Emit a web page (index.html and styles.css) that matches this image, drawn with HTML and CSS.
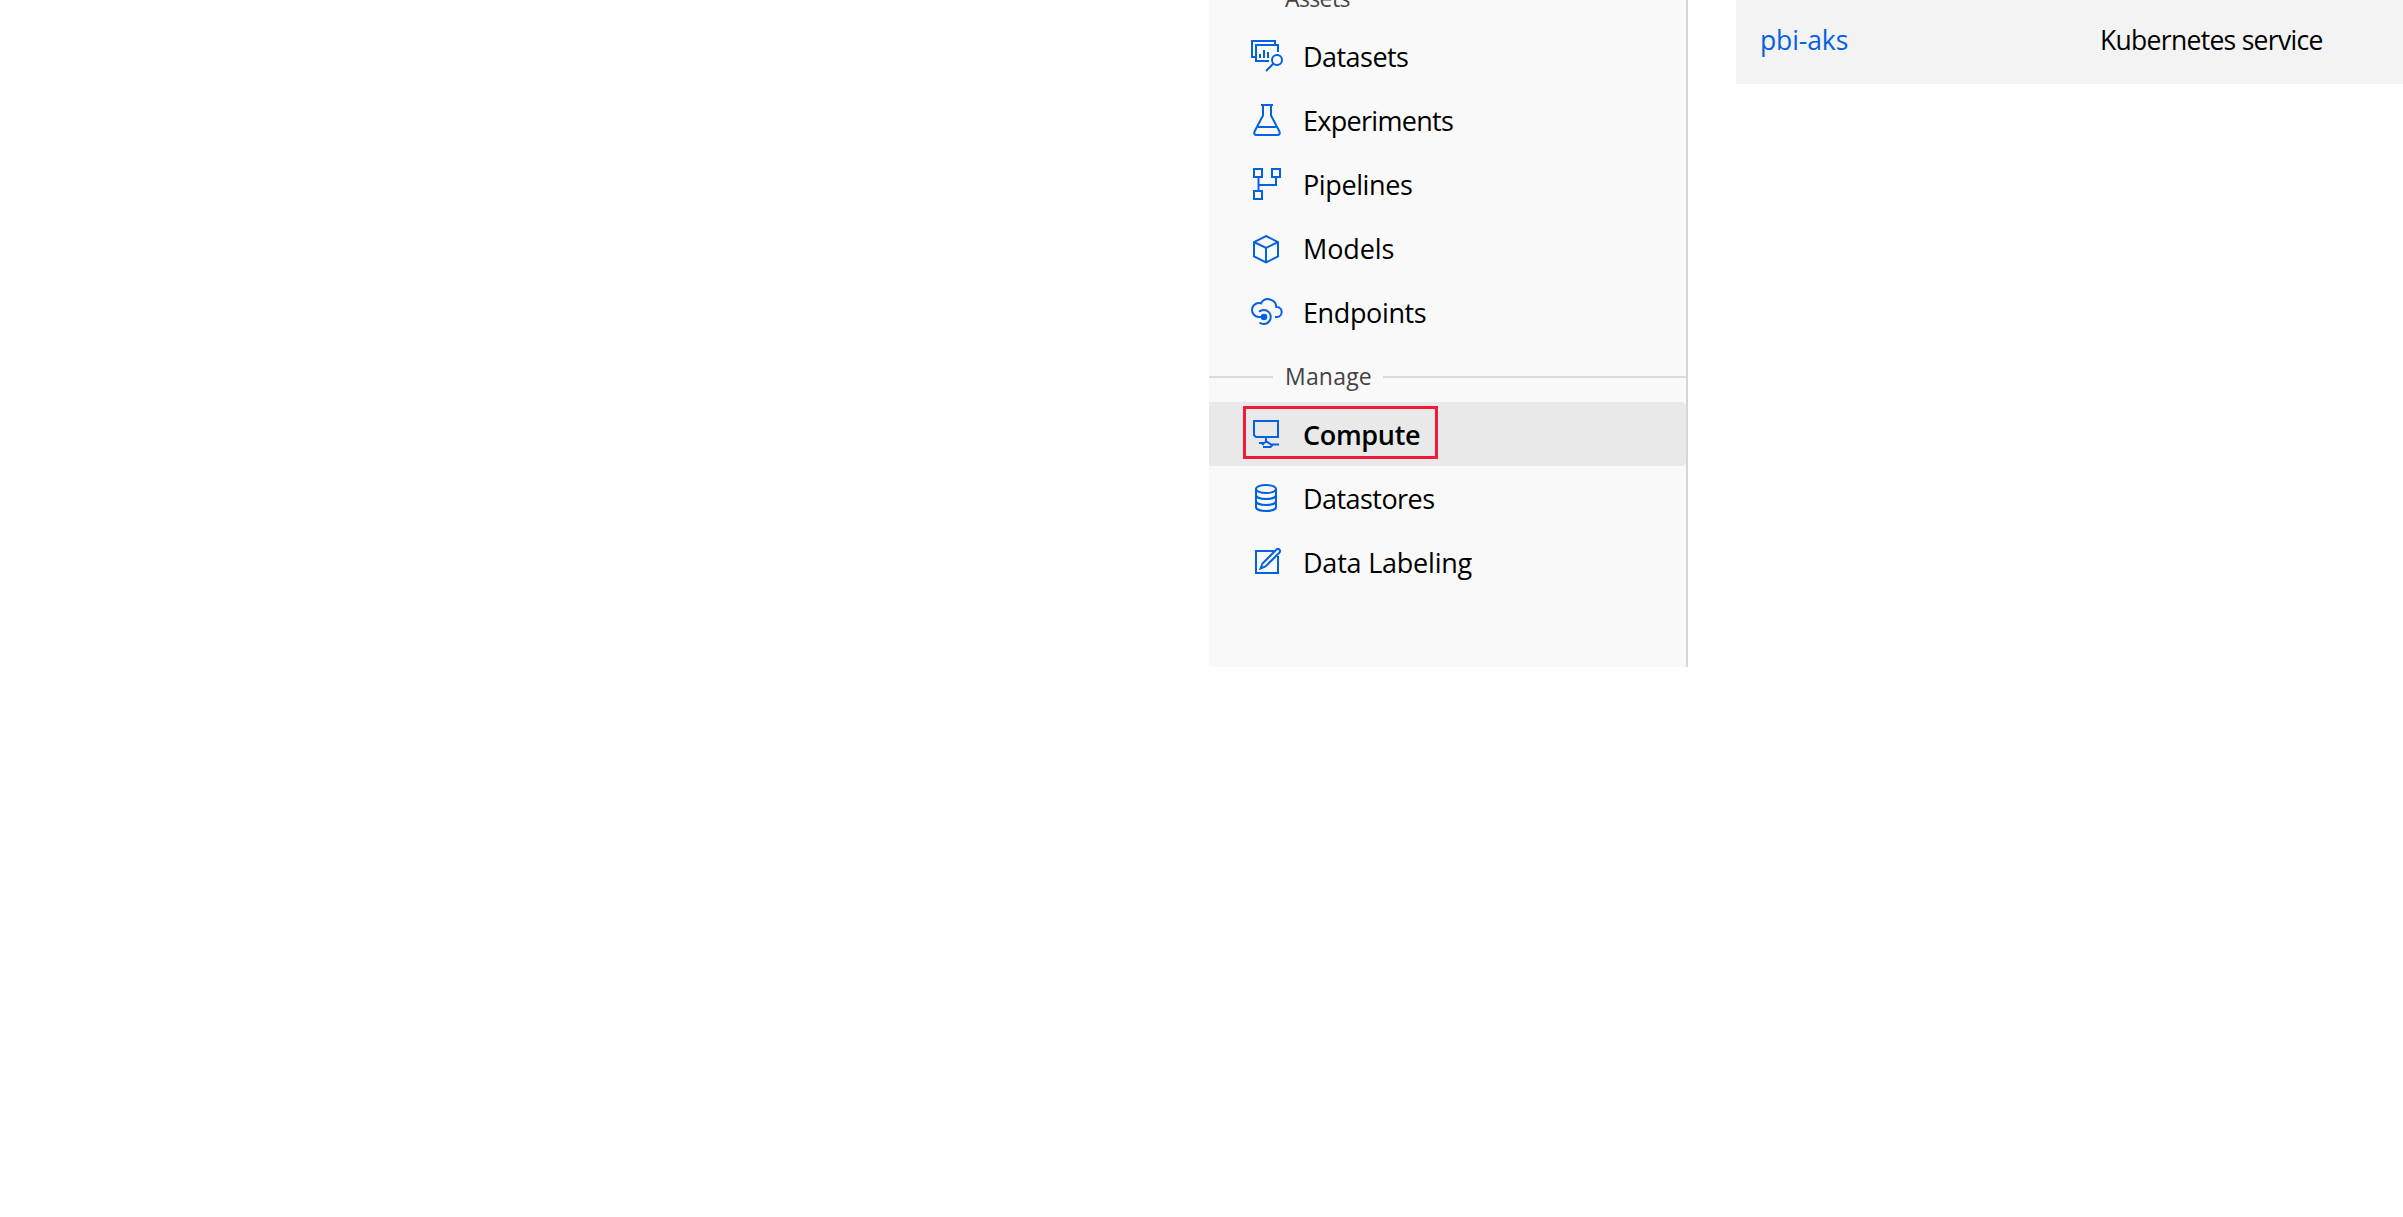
FILE: index.html
```html
<!DOCTYPE html>
<html lang="en">
<head>
<meta charset="utf-8">
<title>Compute</title>
<link rel="stylesheet" href="styles.css">
</head>
<body>
<div class="page">
  <nav class="sidebar">
    <div class="section section-assets"><span class="t-assets">Assets</span></div>
    <a class="item">
      <svg class="icon" viewBox="0 0 32 32"><path d="M5 17H1V1H24V4M27 12V5H5V21H18M9 14V18M13 10V18M17 12V18M22.5 23.5L15 31"/><circle cx="26" cy="20" r="5"/></svg>
      <span class="t-datasets">Datasets</span>
    </a>
    <a class="item">
      <svg class="icon" viewBox="0 0 32 32"><path d="M10 1H22M12 1V11.5L3.8 27Q2 31 6 31H26Q30 31 28.200 27L20 11.500V1M7 23H25"/></svg>
      <span class="t-experiments">Experiments</span>
    </a>
    <a class="item">
      <svg class="icon" viewBox="0 0 32 32"><path d="M3 1H11V9H3ZM21 1H29V9H21ZM3 23H11V31H3ZM7.500 9V23M7.500 17H25V9"/></svg>
      <span class="t-pipelines">Pipelines</span>
    </a>
    <a class="item">
      <svg class="icon" viewBox="0 0 32 32"><path d="M15 4L27 10V24.500L15 30.500L3 24.500V10ZM3 10L15 16L27 10M15 16V30"/></svg>
      <span class="t-models">Models</span>
    </a>
    <a class="item">
      <svg class="icon" viewBox="0 0 32 32"><path d="M12 21H8A7 7 0 0 1 8 7Q9.500 7 10 7.300A8.200 8.200 0 0 1 25.300 11A5 5 0 0 1 26 21H24M8 15.800A7 7 0 1 1 8.500 26.500"/><circle class="fill" cx="13" cy="21" r="3.300"/></svg>
      <span class="t-endpoints">Endpoints</span>
    </a>
    <div class="section"><span class="t-manage">Manage</span></div>
    <a class="item selected">
      <svg class="icon" viewBox="0 0 32 32"><path d="M3 3H27V19H5L3 17ZM15 19V23M8 25H13L15.500 23.500L20 26.500H28M11 26L13 26.500M12 29H19.500L21.500 27"/></svg>
      <span class="t-compute">Compute</span>
      <i class="highlight"></i>
    </a>
    <a class="item">
      <svg class="icon" viewBox="0 0 32 32"><ellipse cx="15" cy="7" rx="10" ry="4"/><path d="M5 7V25C5 30.300 25 30.300 25 25V7M5 13C5 18.300 25 18.300 25 13M5 19C5 24.300 25 24.300 25 19"/></svg>
      <span class="t-datastores">Datastores</span>
    </a>
    <a class="item">
      <svg class="icon" viewBox="0 0 32 32"><path d="M23 5H5V27H27V10M9.500 22.500L11.500 17.500L25.500 3.500Q27 2.200 28.400 3.600Q29.800 5 28.500 6.500L14.500 20.500Z"/></svg>
      <span class="t-labeling">Data Labeling</span>
    </a>
  </nav>
  <main class="content">
    <div class="row">
      <a class="name">pbi-aks</a>
      <span class="type">Kubernetes service</span>
    </div>
  </main>
</div>
</body>
</html>
```
FILE: styles.css
```css
body {
  margin: 0;
  background: #fff;
  color: #000;
  font-family: "Open Sans", "Noto Sans", sans-serif;
  overflow: hidden;
}
.page {
  display: flex;
  height: 1217px;
  padding-left: 1209px;
  overflow: hidden;
}
.sidebar {
  flex: none;
  box-sizing: border-box;
  width: 479px;
  height: 701px;
  margin-top: -34px;
  background: #f9f9f9;
  border-right: 2px solid #d6d6d6;
}
.section {
  display: flex;
  align-items: center;
  gap: 12px;
  height: 58px;
  padding-top: 8px;
  box-sizing: border-box;
  font-size: 23px;
  color: #444;
}
.section::before,
.section::after {
  content: "";
  height: 2px;
  background: #dcdcdc;
}
.section::before { width: 64px; }
.section::after { flex: 1; }
.section span { flex: none; width: 86px; margin-top: -2px; white-space: nowrap; }
.item {
  position: relative;
  display: flex;
  align-items: center;
  gap: 20px;
  height: 64px;
  padding-left: 42px;
  font-size: 27px;
}
.item span { white-space: nowrap; }
.selected {
  background: #e9e9e9;
  border-radius: 0 5px 5px 0;
  font-weight: 600;
}
.highlight {
  position: absolute;
  left: 34px;
  top: 4px;
  box-sizing: border-box;
  width: 195px;
  height: 53px;
  border: 3px solid #f21a38;
}
.icon {
  flex: none;
  width: 32px;
  height: 32px;
  fill: none;
  stroke: #0461e2;
  stroke-width: 2;
}
.fill { fill: #0461e2; stroke: none; }
.content {
  flex: 1;
  padding-left: 48px;
}
.row {
  display: flex;
  align-items: center;
  height: 84px;
  padding: 0 0 0 24px;
  box-sizing: border-box;
  background: #f3f3f3;
  font-size: 26.5px;
}
.name { width: 340px; color: #0461e2; letter-spacing: -0.1px; padding-bottom: 5px; }
.type { letter-spacing: -0.7px; padding-bottom: 5px; }
.t-assets { letter-spacing: -0.62px; }
.t-manage { letter-spacing: 0.2px; }
.t-datasets { letter-spacing: -0.54px; }
.t-experiments { letter-spacing: -0.7px; }
.t-pipelines { letter-spacing: -0.4px; }
.t-models { letter-spacing: -0.1px; }
.t-endpoints { letter-spacing: -0.38px; }
.t-compute { letter-spacing: -0.33px; }
.t-datastores { letter-spacing: -0.55px; }
.t-labeling { letter-spacing: -0.22px; }
```
